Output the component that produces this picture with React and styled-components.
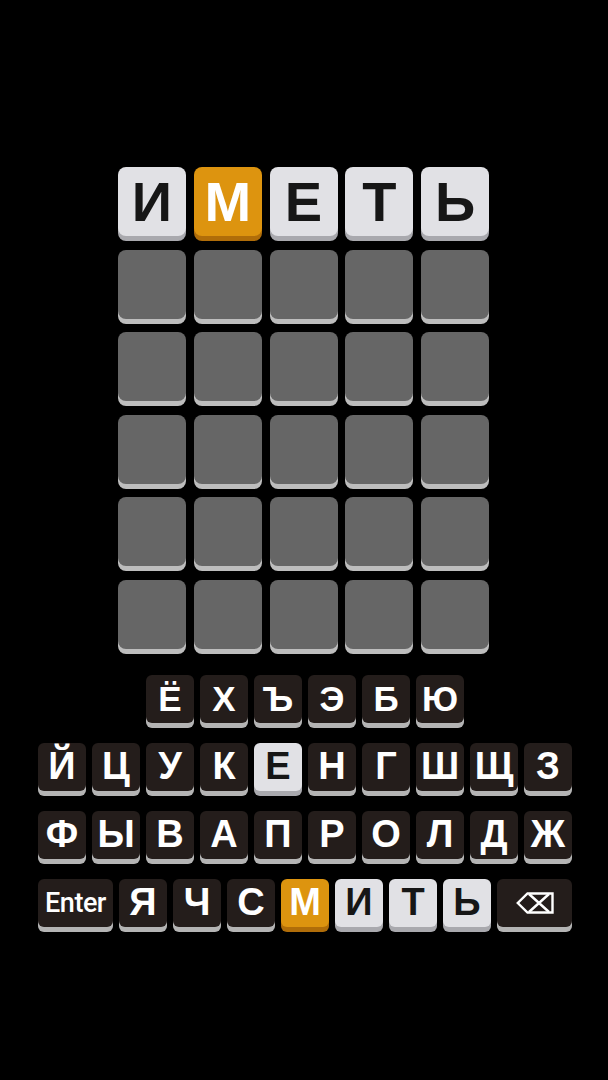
import styled, { createGlobalStyle } from "styled-components";

const GlobalStyle = createGlobalStyle`
    body {
        margin: 0;
        background-color: #000000;
        font-family: "Liberation Sans", Arial, sans-serif;
    }
`

const guess = ["И", "М", "Е", "Т", "Ь"];
const guessState = ["light", "orange", "light", "light", "light"];

const rows = [
    ["Ё", "Х", "Ъ", "Э", "Б", "Ю"],
    ["Й", "Ц", "У", "К", "Е", "Н", "Г", "Ш", "Щ", "З"],
    ["Ф", "Ы", "В", "А", "П", "Р", "О", "Л", "Д", "Ж"],
];

const lastRow = ["Я", "Ч", "С", "М", "И", "Т", "Ь"];
const keyState = { Е: "light", М: "orange", И: "light", Т: "light", Ь: "light" };

const colors = {
    empty: { face: "#666666", shade: "#bdbdbd", text: "#ffffff" },
    light: { face: "#e1e1e5", shade: "#a9a9ae", text: "#161616" },
    orange: { face: "#dd940f", shade: "#b06d09", text: "#ffffff" },
    dark: { face: "#241d1b", shade: "#b4b4b4", text: "#ffffff" },
};

function BackspaceIcon() {
    return (
        <svg width="38" height="22" viewBox="0 0 38 22" fill="none">
            <path d="M11.5 1.5 H36.5 V20.5 H11.5 L1.8 11 Z" stroke="#fff" strokeWidth="2.4" strokeLinejoin="miter" />
            <path d="M13 2 L33 20 M33 2 L13 20" stroke="#fff" strokeWidth="2.4" />
        </svg>
    );
}

function App() {
    return (
        <Page>
            <GlobalStyle />
            <Board>
                {guess.map((l, i) => (
                    <Tile key={i} $state={guessState[i]}>{l}</Tile>
                ))}
                {Array.from({ length: 25 }).map((_, i) => (
                    <Tile key={"e" + i} $state="empty" />
                ))}
            </Board>
            <Keyboard>
                {rows.map((row, r) => (
                    <KeyRow key={r}>
                        {row.map((k) => (
                            <Key key={k} $state={keyState[k] || "dark"} $small={r === 0}>{k}</Key>
                        ))}
                    </KeyRow>
                ))}
                <KeyRow>
                    <Key $state="dark" $wide>
                        <EnterText>Enter</EnterText>
                    </Key>
                    {lastRow.map((k) => (
                        <Key key={k} $state={keyState[k] || "dark"}>{k}</Key>
                    ))}
                    <Key $state="dark" $wide>
                        <BackspaceIcon />
                    </Key>
                </KeyRow>
            </Keyboard>
        </Page>
    );
}

const Page = styled.div`
    width: 608px;
    height: 1080px;
    background-color: #000000;
    display: flex;
    flex-direction: column;
    align-items: center;
    box-sizing: border-box;
    padding-top: 167px;
`

const Board = styled.div`
    display: grid;
    grid-template-columns: repeat(5, 68px);
    column-gap: 7.8px;
    row-gap: 13.5px;
    margin-left: -1px;
`

const Tile = styled.div`
    height: 69px;
    border-radius: 8px;
    background-color: ${(p) => colors[p.$state].face};
    box-shadow: 0 5px 0 ${(p) => colors[p.$state].shade};
    color: ${(p) => colors[p.$state].text};
    display: flex;
    align-items: center;
    justify-content: center;
    font-size: 56px;
    font-weight: 700;
`

const Keyboard = styled.div`
    margin-top: 26px;
    margin-left: 2px;
    display: flex;
    flex-direction: column;
    gap: 20px;
`

const KeyRow = styled.div`
    display: flex;
    justify-content: center;
    gap: 6px;
`

const Key = styled.div`
    width: ${(p) => (p.$wide ? "75px" : "48px")};
    height: 48px;
    border-radius: 6px;
    background-color: ${(p) => colors[p.$state].face};
    box-shadow: 0 5px 0 ${(p) => colors[p.$state].shade};
    color: ${(p) => colors[p.$state].text};
    display: flex;
    align-items: center;
    justify-content: center;
    font-size: ${(p) => (p.$small ? "35px" : "38px")};
    font-weight: 700;
`

const EnterText = styled.span`
    font-family: Roboto, "Liberation Sans", sans-serif;
    font-size: 27px;
    font-weight: 500;
    letter-spacing: -0.5px;
`

export default App;
